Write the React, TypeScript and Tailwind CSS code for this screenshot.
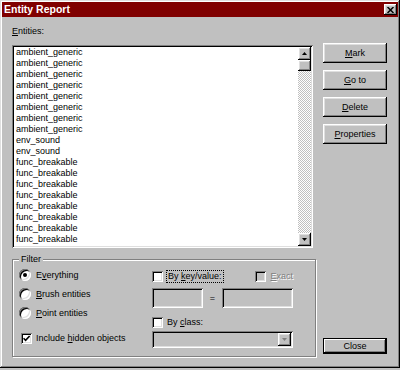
import React from "react"

const raised =
  "shadow-[inset_-1px_-1px_#000,inset_1px_1px_#fff,inset_-2px_-2px_#808080,inset_2px_2px_#dfdfdf]"
const sunken =
  "shadow-[inset_1px_1px_#808080,inset_-1px_-1px_#fff,inset_2px_2px_#000,inset_-2px_-2px_#dfdfdf]"

const entities = [
  ...Array(8).fill("ambient_generic"),
  "env_sound",
  "env_sound",
  ...Array(8).fill("func_breakable"),
]

const Arrow = ({ down, color = "#000" }: { down?: boolean; color?: string }) => (
  <svg width="5" height="3" viewBox="0 0 5 3">
    <path d={down ? "M0 0 L5 0 L2.5 3Z" : "M2.5 0 L5 3 L0 3Z"} fill={color} />
  </svg>
)

const Radio = ({ checked }: { checked?: boolean }) => (
  <span
    className={`w-[12px] h-[12px] shrink-0 rounded-full bg-white flex items-center justify-center ${sunken}`}
  >
    {checked && <span className="w-[4px] h-[4px] rounded-full bg-black" />}
  </span>
)

const Check = ({ checked, disabled }: { checked?: boolean; disabled?: boolean }) => (
  <span
    className={`w-[11px] h-[11px] shrink-0 flex items-center justify-center ${
      disabled ? "bg-[#c0c0c0]" : "bg-white"
    } ${sunken}`}
  >
    {checked && (
      <svg width="7" height="7" viewBox="0 0 7 7">
        <path d="M0.5 3.2 L2.6 5.4 L6.6 1" stroke="#000" strokeWidth="1.6" fill="none" />
      </svg>
    )}
  </span>
)

const Btn = ({ children, def }: { children: React.ReactNode; def?: boolean }) => (
  <div
    className={`w-[64px] flex items-center justify-center text-[9px] text-black ${
      def
        ? "h-[16px] shadow-[inset_-1px_-1px_#000,inset_1px_1px_#000,inset_-2px_-2px_#000,inset_2px_2px_#fff,inset_-3px_-3px_#808080]"
        : `h-[20px] ${raised}`
    }`}
  >
    {children}
  </div>
)

export default function App() {
  return (
    <div className="w-[400px] h-[370px] bg-[#c0c0c0] font-['Liberation_Sans',Arial,sans-serif] text-[9px] leading-[11px] text-black">
      <div
        className={`w-[400px] h-[368px] p-[2px] flex flex-col shadow-[inset_-1px_-1px_#000,inset_1px_1px_#dfdfdf,inset_-2px_-2px_#808080,inset_2px_2px_#fff]`}
      >
        <div className="h-[15px] bg-[#800000] flex items-center justify-between pl-[2px] pr-[1px]">
          <span className="text-white font-bold text-[10.5px]">Entity Report</span>
          <div className={`w-[13px] h-[11px] bg-[#c0c0c0] flex items-center justify-center ${raised}`}>
            <svg width="7" height="6" viewBox="0 0 7 6">
              <path d="M0.5 0 L6.5 6 M6.5 0 L0.5 6" stroke="#000" strokeWidth="1.5" />
            </svg>
          </div>
        </div>

        <div className="flex flex-1 pl-[10px]">
          <div className="w-[304px] flex flex-col pt-[9px]">
            <div className="mb-[8px]">
              <u>E</u>ntities:
            </div>
            <div className={`w-[301px] h-[203px] bg-white p-[2px] flex ${sunken}`}>
              <div className="flex-1 overflow-hidden pl-[2px]">
                {entities.map((e, i) => (
                  <div key={i} className="h-[11px] leading-[11px]">
                    {e}
                  </div>
                ))}
              </div>
              <div className="w-[13px] flex flex-col">
                <div className={`h-[13px] bg-[#c0c0c0] flex items-center justify-center ${raised}`}>
                  <Arrow />
                </div>
                <div className={`h-[11px] bg-[#c0c0c0] ${raised}`} />
                <div className="flex-1 bg-[repeating-conic-gradient(#c0c0c0_0_25%,#fff_0_50%)] bg-[length:2px_2px]" />
                <div className={`h-[13px] bg-[#c0c0c0] flex items-center justify-center ${raised}`}>
                  <Arrow down />
                </div>
              </div>
            </div>

            <div className="relative mt-[11px] h-[98px] border border-[#808080] shadow-[inset_1px_1px_#fff,1px_1px_#fff] flex pt-[9px] pl-[6px]">
              <span className="absolute -top-[6px] left-[6px] px-[2px] bg-[#c0c0c0]">Filter</span>
              <div className="w-[133px] flex flex-col">
                <div className="h-[12px] flex items-center gap-[5px]">
                  <Radio checked />
                  <span>
                    E<u>v</u>erything
                  </span>
                </div>
                <div className="h-[12px] mt-[7px] flex items-center gap-[5px]">
                  <Radio />
                  <span>
                    <u>B</u>rush entities
                  </span>
                </div>
                <div className="h-[12px] mt-[7px] flex items-center gap-[5px]">
                  <Radio />
                  <span>
                    <u>P</u>oint entities
                  </span>
                </div>
                <div className="h-[12px] mt-[13px] flex items-center gap-[5px] pl-[2px]">
                  <Check checked />
                  <span className="ml-[-1px]">
                    Include <u>h</u>idden objects
                  </span>
                </div>
              </div>

              <div className="w-[141px] flex flex-col">
                <div className="h-[12px] mt-[1px] flex items-center justify-between">
                  <div className="flex items-center gap-[4px]">
                    <Check />
                    <span className="outline outline-1 outline-dotted outline-black px-[1px]">
                      By <u>k</u>ey/value:
                    </span>
                  </div>
                  <div className="flex items-center gap-[4px]">
                    <Check disabled />
                    <span className="text-[#808080] [text-shadow:1px_1px_#fff]">
                      <u>E</u>xact
                    </span>
                  </div>
                </div>
                <div className="h-[20px] mt-[6px] flex items-center">
                  <div className={`w-[51px] h-[20px] ${sunken}`} />
                  <span className="flex-1 text-center">=</span>
                  <div className={`w-[71px] h-[20px] ${sunken}`} />
                </div>
                <div className="h-[12px] mt-[8px] flex items-center gap-[4px]">
                  <Check />
                  <span>
                    By <u>c</u>lass:
                  </span>
                </div>
                <div className={`h-[17px] mt-[3px] flex items-center justify-end p-[2px] ${sunken}`}>
                  <div className={`w-[13px] h-[13px] bg-[#c0c0c0] flex items-center justify-center ${raised}`}>
                    <Arrow down color="#808080" />
                  </div>
                </div>
              </div>
            </div>
          </div>

          <div className="ml-[7px] w-[64px] flex flex-col gap-[7px] pt-[26px] pb-[12px]">
            <Btn>
              <u>M</u>ark
            </Btn>
            <Btn>
              <u>G</u>o to
            </Btn>
            <Btn>
              <u>D</u>elete
            </Btn>
            <Btn>
              <u>P</u>roperties
            </Btn>
            <div className="mt-auto">
              <Btn def>Close</Btn>
            </div>
          </div>
        </div>
      </div>
    </div>
  )
}
